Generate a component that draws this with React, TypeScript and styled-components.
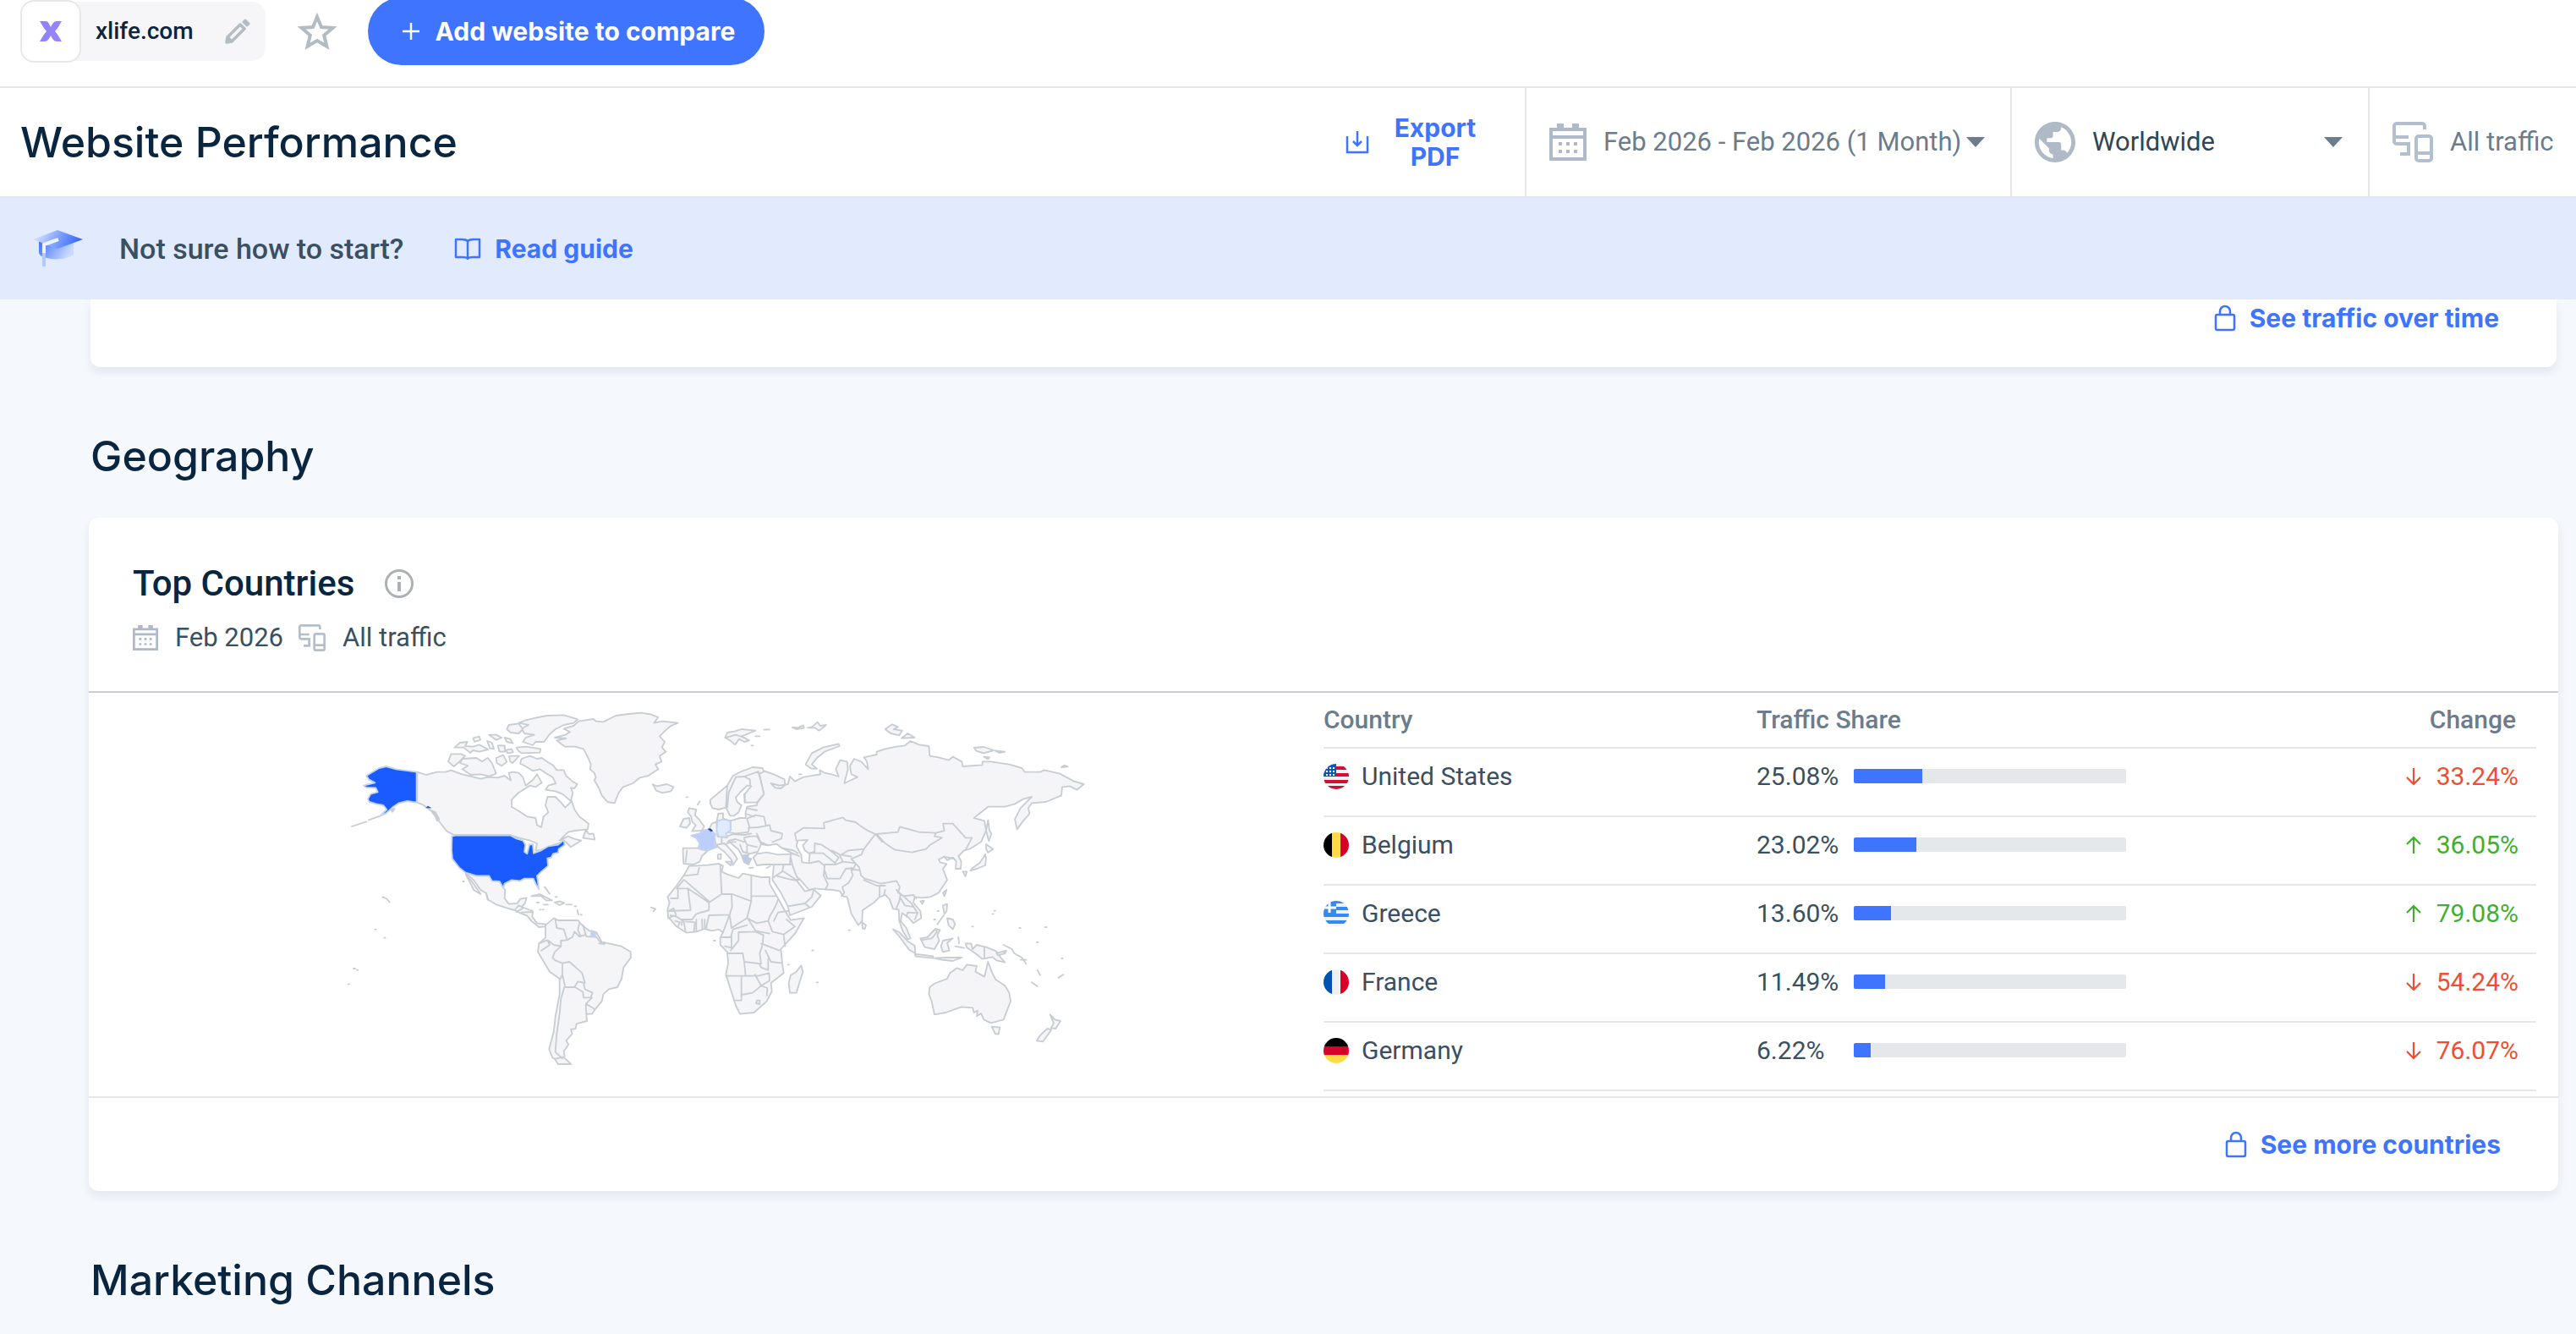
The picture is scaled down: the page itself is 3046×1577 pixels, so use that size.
import React from "react";
import styled, { createGlobalStyle } from "styled-components";

const GlobalStyle = createGlobalStyle`
  *, *::before, *::after { box-sizing: border-box; }
  html, body { margin: 0; background: #f5f8fd; overflow: hidden; }
  body { font-family: Roboto, "Liberation Sans", sans-serif; font-size: 30px; line-height: 36px; color: #3a4f60; }
  button, select { font: inherit; color: inherit; background: none; border: 0; padding: 0; margin: 0; }
  svg { display: block; flex: none; }
`;

const brand = `Inter, "Liberation Sans", sans-serif`;

/* ---------- top bar ---------- */
const TopBar = styled.header`
  display: flex;
  align-items: center;
  height: 104px;
  padding: 0 24px 28px;
  border-bottom: 2px solid #e5e7e9;
  background: #fff;
`;

const SiteChip = styled.div`
  display: flex;
  align-items: center;
  height: 70px;
  padding-right: 18px;
  border-radius: 16px;
  background: #f6f6f8;
`;

const Favicon = styled.span`
  display: grid;
  place-items: center;
  width: 72px;
  height: 74px;
  margin-right: 17px;
  border: 2px solid #e6e8ea;
  border-radius: 16px;
  background: #fff;
`;

const SiteName = styled.span`
  font-size: 28px;
  font-weight: 500;
  color: #092540;
`;

const IconButton = styled.button`
  display: grid;
  place-items: center;
  margin-left: 37px;
  cursor: pointer;
`;

const CompareButton = styled.button`
  display: flex;
  align-items: center;
  gap: 18px;
  height: 80px;
  margin-left: 36px;
  padding: 0 35px 0 40px;
  border-radius: 40px;
  background: #3e74fe;
  color: #fff;
  font-family: ${brand};
  font-weight: 700;
  font-size: 30px;
  cursor: pointer;
`;

/* ---------- page header ---------- */
const PageHeader = styled.div`
  display: flex;
  align-items: stretch;
  height: 130px;
  border-bottom: 2px solid #e2e8f0;
  background: #fff;
`;

const Heading = styled.h1`
  flex: 1;
  align-self: center;
  margin: 0;
  padding-left: 24px;
  font-family: ${brand};
  font-size: 50px;
  line-height: 60px;
  font-weight: 500;
  color: #092540;
`;

const ExportButton = styled.button`
  display: flex;
  align-items: center;
  gap: 22px;
  padding-right: 50px;
  color: #3e74fe;
  font-family: ${brand};
  font-weight: 700;
  font-size: 30px;
  line-height: 34px;
  text-align: center;
  cursor: pointer;
  span { width: 112px; }
`;

const FilterCell = styled.div<{ $width: number }>`
  display: flex;
  align-items: center;
  width: ${(p) => p.$width}px;
  padding: 0 30px 0 27px;
  gap: 20px;
  border-left: 2px solid #e5e7e9;
  font-size: 31px;
`;

const FilterButton = styled.button`
  display: flex;
  flex: 1;
  align-items: center;
  justify-content: space-between;
  white-space: nowrap;
  color: #6b7c8c;
  cursor: pointer;
`;

const RegionSelect = styled.select`
  flex: 1;
  height: 60px;
  appearance: none;
  color: #2f4558;
  cursor: pointer;
`;

const Muted = styled.span`
  white-space: nowrap;
  color: #6b7c8c;
`;

/* ---------- guide banner ---------- */
const Banner = styled.aside`
  display: flex;
  align-items: center;
  height: 120px;
  padding-left: 38px;
  background: #e2eafd;
`;

const BannerText = styled.span`
  margin: 0 60px 0 42px;
  font-size: 34px;
  font-weight: 500;
  color: #3a4f60;
`;

const ActionLink = styled.a`
  display: inline-flex;
  align-items: center;
  gap: 16px;
  color: #3e74fe;
  font-family: ${brand};
  font-weight: 700;
  font-size: 30px;
  line-height: 36px;
  text-decoration: none;
`;

/* ---------- content ---------- */
const Content = styled.main`
  padding: 0 21px 0 105px;
`;

const Card = styled.section`
  border-radius: 12px;
  background: #fff;
  box-shadow: 0 6px 12px rgba(14, 30, 62, 0.08);
`;

const CutCard = styled(Card)`
  display: flex;
  align-items: flex-start;
  justify-content: flex-end;
  height: 80px;
  margin: 0 2px;
  padding: 4px 68px 0 0;
  border-radius: 0 0 12px 12px;
`;

const SectionTitle = styled.h2`
  margin: 0;
  padding: 75px 0 43px 2px;
  font-family: ${brand};
  font-size: 50px;
  line-height: 60px;
  font-weight: 500;
  color: #092540;
`;

const CardHeader = styled.div`
  height: 207px;
  padding: 52px 52px 0;
  border-bottom: 2px solid #c9cdd1;
`;

const CardTitleRow = styled.div`
  display: flex;
  align-items: center;
  gap: 36px;
`;

const CardTitle = styled.h3`
  margin: 0;
  font-size: 42px;
  line-height: 52px;
  font-weight: 500;
  color: #092540;
`;

const CardMeta = styled.div`
  display: flex;
  align-items: center;
  margin-top: 20px;
  font-size: 31px;
`;

const MetaText = styled.span`
  margin: 0 18px 0 20px;
`;

const CardBody = styled.div`
  display: grid;
  grid-template-columns: 1fr 1fr;
`;

const MapPane = styled.div`
  display: flex;
  justify-content: center;
  padding-top: 3px;
`;

const TablePane = styled.div`
  padding: 0 26px 6px 0;
`;

const CountryTable = styled.table`
  width: 100%;
  border-collapse: collapse;
  table-layout: fixed;
`;

const HeadCell = styled.th<{ $width?: string; $end?: boolean }>`
  width: ${(p) => p.$width || "auto"};
  height: 65px;
  padding: 0 ${(p) => (p.$end ? 24 : 0)}px 0 0;
  border-bottom: 2px solid #e5e7e9;
  text-align: ${(p) => (p.$end ? "right" : "left")};
  font-weight: 500;
  color: #6b7c8c;
`;

const Cell = styled.td`
  height: 81px;
  padding: 0 0 14px;
  border-bottom: 2px solid #e5e7e9;
`;

const Inline = styled.div<{ $end?: boolean; $tone?: string }>`
  display: flex;
  align-items: center;
  justify-content: ${(p) => (p.$end ? "flex-end" : "flex-start")};
  gap: ${(p) => (p.$end ? 17 : 15)}px;
  padding-right: ${(p) => (p.$end ? 21 : 0)}px;
  color: ${(p) => p.$tone || "#3a4f60"};
`;

const Percent = styled.span`
  width: 100px;
`;

const Flag = styled.svg`
  width: 30px;
  height: 30px;
  border-radius: 50%;
`;

const Track = styled.div`
  width: 322px;
  height: 17px;
  border-radius: 2px;
  overflow: hidden;
  background: #e4e8eb;
`;

const Fill = styled.div`
  height: 100%;
  background: #3e74fe;
`;

const CardFooter = styled.div`
  display: flex;
  align-items: center;
  justify-content: flex-end;
  height: 112px;
  padding-right: 68px;
  border-top: 2px solid #e5e7e9;
`;

/* ---------- icons ---------- */
const DevicesIcon = ({ size }: { size: number }) => (
  <svg width={size} height={size} viewBox="0 0 48 48" fill="none" stroke="#b3bfcc" strokeWidth="4">
    <path d="M38 9V5a3 3 0 0 0-3-3H5a3 3 0 0 0-3 3v18a3 3 0 0 0 3 3h14M2 18h17M8 26h11v12H9" />
    <rect x="28" y="17" width="18" height="29" rx="3" />
    <path d="M28 37h18" />
  </svg>
);

const CalendarIcon = ({ size }: { size: number }) => (
  <svg width={size} height={size} viewBox="0 0 44 44" fill="#b0b9c8">
    <path fillRule="evenodd" d="M0 5h9V0h8v5h10V0h8v5h9v39H0zM4 9v5h36V9zM4 18v22h36V18z" />
    <path d="M11 22h4v4h-4zM20 22h4v4h-4zM29 22h4v4h-4zM11 31h4v4h-4zM20 31h4v4h-4zM29 31h4v4h-4z" />
  </svg>
);

const GlobeIcon = () => (
  <svg width="48" height="48" viewBox="2 2 20 20" fill="#b0bac6">
    <path d="M12 2C6.480 2 2 6.480 2 12s4.480 10 10 10 10-4.480 10-10S17.520 2 12 2zm-1 17.930c-3.950-.49-7-3.850-7-7.930 0-.62.080-1.210.210-1.790L9 15v1c0 1.100.900 2 2 2v1.930zm6.900-2.540c-.26-.81-1-1.390-1.900-1.390h-1v-3c0-.55-.45-1-1-1H8v-2h2c.550 0 1-.45 1-1V7h2c1.100 0 2-.9 2-2v-.41c2.930 1.190 5 4.060 5 7.410 0 2.080-.8 3.970-2.100 5.390z" />
  </svg>
);

const Caret = () => (
  <svg width="22" height="12" viewBox="0 0 22 12">
    <path d="M0 0h22L11 12z" fill="#6b7c8c" />
  </svg>
);

const LockIcon = () => (
  <svg width="26" height="32" viewBox="0 0 26 32" fill="none" stroke="#3e74fe" strokeWidth="2.500">
    <rect x="2" y="12" width="22" height="18" rx="2" />
    <path d="M7 12V8a6 6 0 0 1 12 0v4" />
  </svg>
);

const BookIcon = () => (
  <svg width="32" height="26" viewBox="0 0 32 26" fill="none" stroke="#3e74fe" strokeWidth="2.500" strokeLinejoin="round">
    <path d="M16 4c-2-2-4-2-7-2H2v21h8c3 0 5 0 6 2 1-2 3-2 6-2h8V2h-7c-3 0-5 0-7 2zM16 4v20" />
  </svg>
);

const PencilIcon = () => (
  <svg width="30" height="30" viewBox="0 0 30 30" fill="none" stroke="#b3bcc2" strokeLinejoin="round">
    <path d="M3 22L18 7l5 5L8 27l-6 1z" strokeWidth="3.500" />
    <path d="M2 28l2-6 4 4z" fill="#b3bcc2" strokeWidth="2" />
    <path d="M22 4l2-2 4 4-2 2z" fill="#b3bcc2" strokeWidth="3" />
  </svg>
);

const StarIcon = () => (
  <svg width="48" height="46" viewBox="0 0 48 46">
    <path
      d="M24 6l5 12 13.500 1-10.300 8.800 3.200 13L24 34l-11.400 6.800 3.200-13L5.500 19 19 18z"
      fill="none"
      stroke="#b3bcc2"
      strokeWidth="4"
    />
  </svg>
);

const SiteLogo = () => (
  <svg width="28" height="26" viewBox="0 0 28 26">
    <defs>
      <linearGradient id="xg" x1="0" y1="0" x2="1" y2="0">
        <stop offset="0" stopColor="#8d84fb" />
        <stop offset="1" stopColor="#9b84f8" />
      </linearGradient>
    </defs>
    <path
      d="M1 1h7c3 0 4 3 6 7 2-4 4-7 7-7h6c-3 5-5 9-8 12 3 3 5 7 8 12h-6c-3 0-5-3-7-7-2 4-4 7-7 7H1c3-5 5-9 8-12-3-3-5-7-8-12z"
      fill="url(#xg)"
    />
  </svg>
);

const HatIcon = () => (
  <svg width="61" height="44" viewBox="0 0 61 44">
    <defs>
      <linearGradient id="hatTop" x1="0" y1="0.400" x2="1" y2="0.600">
        <stop offset="0" stopColor="#dce7ff" />
        <stop offset="0.500" stopColor="#7da0ff" />
        <stop offset="1" stopColor="#2b61f6" />
      </linearGradient>
      <linearGradient id="hatBase" x1="0" y1="0" x2="1" y2="0.300">
        <stop offset="0" stopColor="#3e74fe" />
        <stop offset="1" stopColor="#ccdaff" />
      </linearGradient>
    </defs>
    <path d="M8 14h41v15c-8 6-24 7-35 3-4-1-6-3-6-6z" fill="url(#hatBase)" />
    <path d="M1 11L30 0l30 11-30 11z" fill="url(#hatTop)" />
    <path d="M31 11L14 17v17" fill="none" stroke="#eef3ff" strokeWidth="4" />
    <path d="M14 27v16" stroke="#b3c8ff" strokeWidth="4" />
  </svg>
);

const InfoIcon = () => (
  <svg width="34" height="34" viewBox="0 0 34 34" fill="none" stroke="#adb0b3" strokeWidth="3">
    <circle cx="17" cy="17" r="15.500" />
    <path d="M17 15v11M17 8v4" strokeWidth="4" />
  </svg>
);

const DownloadIcon = () => (
  <svg width="28" height="28" viewBox="0 0 28 28" fill="none" stroke="#3e74fe" strokeWidth="2.500">
    <path d="M2 7v19h24V7M14 1v17M9 13l5 5 5-5" />
  </svg>
);

const PlusIcon = () => (
  <svg width="22" height="22" viewBox="0 0 22 22" stroke="#fff" strokeWidth="2.500">
    <path d="M11 1v20M1 11h20" />
  </svg>
);

const Arrow = ({ up }: { up: boolean }) => (
  <svg width="20" height="22" viewBox="0 0 20 22" fill="none" stroke="currentColor" strokeWidth="2.200">
    <path d={up ? "M10 21V2M2 10l8-8 8 8" : "M10 1v19M2 12l8 8 8-8"} />
  </svg>
);

/* ---------- flags ---------- */
const flags: Record<string, React.ReactNode> = {
  us: (
    <>
      <path fill="#eef0f3" d="M0 0h30v30H0z" />
      <path fill="#d01030" d="M0 3h30v4H0zM0 11h30v4H0zM0 19h30v4H0zM0 26h30v4H0z" />
      <path fill="#0a57b5" d="M0 0h15v15H0z" />
      <path
        d="M3 5h10M3 9h10M3 13h10"
        stroke="#fff"
        strokeWidth="2"
        strokeDasharray="2 2"
      />
    </>
  ),
  be: (
    <>
      <path d="M0 0h10v30H0z" />
      <path fill="#ffda44" d="M10 0h10v30H10z" />
      <path fill="#d80027" d="M20 0h10v30H20z" />
    </>
  ),
  gr: (
    <>
      <path fill="#f0f0f0" d="M0 0h30v30H0z" />
      <path fill="#338af3" d="M0 0h30v3H0zM0 7h30v4H0zM0 15h30v4H0zM0 23h30v4H0zM0 0h15v15H0z" />
      <path stroke="#fff" strokeWidth="3" d="M7 1v13M0 8h15" />
    </>
  ),
  fr: (
    <>
      <path fill="#0052b4" d="M0 0h10v30H0z" />
      <path fill="#f0f0f0" d="M10 0h10v30H10z" />
      <path fill="#d80027" d="M20 0h10v30H20z" />
    </>
  ),
  de: (
    <>
      <path d="M0 0h30v10H0z" />
      <path fill="#d80027" d="M0 10h30v10H0z" />
      <path fill="#ffda44" d="M0 20h30v10H0z" />
    </>
  ),
};

/* ---------- world map ---------- */
const westLand = [
  // Greenland
  "853,92 905,84 915,92 940,94 985,72 1030,66 1075,62 1110,68 1135,78 1120,98 1150,92 1205,98 1180,108 1160,125 1140,145 1158,165 1148,185 1162,200 1140,215 1147,235 1125,245 1135,262 1100,285 1070,292 1045,312 1010,325 995,345 980,382 955,378 935,355 925,330 908,300 914,292 908,275 893,262 896,245 888,225 870,190 840,182 805,182 790,172 775,160 808,153 768,150 805,140 822,130 800,118 835,108",
  // Arctic archipelago
  "700,80 740,72 800,70 850,85 835,98 800,105 770,120 748,140 730,165 700,165 690,177 655,165 665,150 695,140 660,135 650,118 675,105 640,98 665,88",
  "605,105 640,100 655,120 640,135 612,132 598,120",
  "632,185 665,182 718,190 715,203 650,205 640,198",
  "412,185 432,168 458,165 450,180 478,182 500,175 532,192 500,200 478,195 468,204 445,185",
  "478,152 500,146 504,158 484,165", "535,140 560,140 580,150 560,158",
  "528,162 545,168 552,190 538,188", "566,178 590,178 592,200 572,200", "596,194 615,190 620,202 600,205",
  "590,150 610,155 620,170 598,165",
  "400,208 435,208 450,215 430,235 410,252 390,235",
  "440,225 490,222 510,235 530,222 545,240 560,278 535,287 505,280 470,282 440,262 460,250 432,240",
  "560,222 585,212 598,235 580,250 562,240", "606,215 642,215 618,240 610,235",
  "650,225 680,215 705,225 722,222 740,235 762,248 775,265 800,265 808,285 830,305 848,315 838,330 825,328 832,345 825,375 795,350 770,340 735,335 745,320 772,312 760,290 735,275 715,262 690,268 665,252 645,242",
  // Canada
  "280,272 312,282 350,272 380,272 400,266 440,280 480,290 505,296 530,290 565,292 590,285 612,302 605,275 620,272 640,275 655,290 665,320 690,300 705,280 722,310 700,325 680,320 640,345 615,370 615,395 640,410 670,430 700,435 705,460 720,468 728,430 745,415 735,390 742,360 770,360 790,380 805,398 828,375 838,405 855,430 888,455 885,475 840,480 815,485 785,515 815,500 840,510 862,515 825,538 815,528 805,518 765,530 720,548 700,550 705,525 680,515 640,505 610,495 410,495 385,482 360,450 330,410 300,388 280,380",
  "878,478 890,492 905,490 910,512 868,506",
  // Mexico and Central America
  "450,628 490,640 535,640 545,655 572,660 585,682 592,690 590,720 605,740 635,738 645,722 668,718 662,738 650,750 690,765 688,785 705,808 735,812 735,820 712,822 685,800 670,782 645,772 625,762 600,755 560,742 532,725 525,702 505,690 480,655",
  "452,635 470,655 492,685 505,705 480,690 468,665",
  "685,712 715,705 758,727 738,728 720,712", "768,735 785,730 802,737 785,744",
  // South America
  "735,815 765,790 780,798 850,798 865,815 890,835 915,840 935,875 960,880 1005,890 1037,910 1038,930 1012,965 1005,1005 990,1035 960,1042 940,1060 935,1085 910,1115 900,1130 880,1130 882,1155 845,1165 842,1182 825,1185 830,1200 808,1225 817,1238 800,1262 803,1280 785,1300 760,1285 748,1255 765,1190 770,1140 785,1060 785,1005 750,980 708,910 712,880 735,860 735,830",
  "768,1290 798,1282 826,1308 780,1308",
  // Iceland and British Isles
  "1115,315 1130,322 1165,315 1190,325 1180,340 1150,346 1128,338",
  "1245,400 1270,405 1265,425 1280,440 1298,465 1290,480 1255,482 1268,460 1255,448 1252,430 1240,415",
  "1225,438 1245,435 1248,455 1235,470 1212,465",
  // Iberia, Italy, islands
  "1223,542 1275,542 1310,552 1290,570 1282,590 1260,600 1225,597 1223,570",
  "1340,530 1370,525 1385,540 1405,563 1415,580 1400,602 1395,583 1370,555 1352,542",
  "1375,590 1395,590 1392,603", "1346,565 1358,562 1357,580 1347,580",
  // Africa
  "1245,605 1262,605 1310,602 1350,597 1365,605 1360,625 1380,635 1420,648 1435,632 1465,638 1500,645 1530,645 1530,668 1560,720 1585,765 1605,797 1652,790 1620,845 1570,900 1575,950 1580,985 1535,1020 1538,1050 1520,1085 1475,1125 1425,1130 1410,1100 1375,990 1383,950 1380,910 1355,885 1355,860 1365,840 1350,830 1325,835 1300,828 1270,838 1235,842 1200,820 1170,785 1168,760 1175,735 1168,715 1200,675 1225,640",
  "1642,958 1648,980 1625,1055 1602,1055 1598,1020 1605,992 1625,980",
];

const eastLand = [
  // Eurasia
  "110,265 130,268 165,280 203,298 205,318 190,330 170,328 155,312 185,320 215,315 222,288 240,305 270,290 330,280 328,265 345,275 370,280 395,288 385,262 400,230 425,235 428,262 415,312 440,300 462,290 440,280 435,250 450,225 475,235 500,262 495,235 485,220 530,210 530,200 560,190 600,182 630,178 650,162 680,175 715,180 718,215 750,220 785,230 800,218 832,235 835,252 905,247 905,235 935,235 1000,245 1045,258 1055,272 1110,272 1125,265 1180,278 1230,305 1265,315 1240,335 1215,322 1188,325 1185,355 1130,378 1080,382 1068,400 1072,420 1050,445 1028,475 1020,440 1040,400 1080,360 1050,368 1020,385 985,395 925,395 875,435 912,445 918,480 900,520 860,545 840,550 820,570 830,590 828,615 810,615 812,588 800,575 780,585 770,572 750,582 755,592 778,598 765,615 780,655 750,700 720,715 690,718 665,715 660,735 685,765 688,790 660,808 645,790 620,772 615,800 635,825 650,862 640,865 622,835 610,800 608,760 588,757 575,722 560,708 540,715 520,735 480,762 478,800 465,815 440,775 425,715 410,712 400,695 375,690 345,688 310,685 290,690 255,650 245,655 275,695 305,688 332,710 300,750 222,780 215,748 190,700 160,655 165,600 130,600 105,603 92,575 105,562 140,557 180,565 235,562 195,542 175,527 145,532 120,528 108,555 78,562 70,575 85,580 75,600 60,592 50,565 38,545 10,522 -5,528 -42,540 -70,550 -102,543 -98,525 -110,505 -125,498 -98,490 -80,478 -65,475 -55,455 -38,448 -32,420 -15,418 -15,437 10,445 45,435 65,435 65,415 70,395 105,390 105,383 130,350 115,285",
  // Scandinavia
  "-60,370 -30,345 0,320 20,285 50,270 90,255 125,258 130,270 112,280 118,300 130,350 105,380 62,380 62,350 85,322 70,320 45,345 30,362 35,378 50,390 40,415 25,427 10,427 -5,398 -30,405 -52,400 -60,385",
  // Arctic islands
  "278,245 300,205 340,185 395,172 398,180 345,200 318,222 300,245 318,260 298,260",
  "0,132 25,128 50,120 100,125 65,140 50,145 78,160 60,165 42,155 28,175 10,160 -8,150",
  "230,113 250,115 270,106 272,116 245,120", "285,115 300,112 320,95 330,108 350,105 340,115 325,125 310,115",
  "560,120 585,103 605,112 590,120 620,125 610,142 580,135", "618,152 640,135 665,150",
  "875,186 910,183 945,195 910,205 885,198", "950,196 985,200 965,204", "910,218 930,220 925,226", "1185,255 1195,248 1208,253",
  // Japan and Sakhalin
  "918,528 943,545 925,557 918,545", "915,563 918,580 915,603 885,615 862,622 870,612 895,595 908,575", "835,625 850,625 845,642",
  "925,443 930,480 937,490 928,517 918,480", "765,700 778,690 770,712",
  // South-east Asia
  "588,830 610,840 640,872 665,888 667,915 645,902 610,855", "665,918 690,920 730,925 730,932 668,926", "735,932 780,930 832,930 800,942 760,938",
  "685,862 710,858 738,828 755,832 745,850 752,870 735,900 700,893", "765,870 800,862 780,878 788,905 765,910 758,890",
  "845,880 865,880 870,900 885,885 918,893 955,908 970,930 985,947 955,940 940,928 905,935 880,915 850,895",
  "765,745 780,740 778,765 770,775", "780,790 800,795 808,812 800,830 785,815", "478,805 492,815 488,828 480,827",
  "685,730 698,728 692,740", "955,915 990,905 985,915 960,922",
  // Oceania
  "718,1035 735,1022 780,1005 790,985 815,967 835,975 850,955 885,960 880,980 912,998 920,965 925,945 940,985 952,1008 985,1030 1000,1055 1005,1085 980,1150 935,1162 910,1150 900,1128 885,1138 888,1118 875,1125 870,1108 830,1105 775,1125 735,1132 725,1085 715,1060",
  "938,1175 967,1178 962,1202 950,1200", "1145,1132 1162,1150 1182,1155 1165,1182 1148,1180 1158,1162", "1135,1182 1150,1186 1120,1228 1098,1225 1108,1208",
];

const westBorders =
  // South America
  "M770,795 775,825 800,830 812,868 M712,880 742,868 750,885 720,905 M745,870 765,885 790,890 768,910 760,930 770,940 795,950 820,945 865,985 875,1020 850,1015 838,1035 805,1035 795,990 795,950 M812,868 830,858 838,838 855,855 875,850 M790,890 790,870 812,868 M855,810 850,832 860,855 M868,815 880,855 915,857 932,878 M870,1020 875,1042 902,1055 895,1072 870,1072 868,1052 840,1035 M900,1072 878,1095 880,1130 M880,1095 910,1113 M802,1035 790,1075 785,1130 775,1200 770,1265 795,1288 M795,990 788,1005 M925,880 945,882 " +
  // Central America
  "M625,762 640,745 650,750 M650,770 690,768 M530,725 525,705 M632,768 655,755 " +
  // Africa
  "M1225,640 1275,635 1280,612 M1228,655 1318,733 1360,705 1355,600 M1180,720 1205,720 1205,685 1240,685 1250,762 1172,765 M1240,685 1315,735 1315,762 1270,775 1255,795 1220,795 1218,815 M1225,655 1200,685 M1360,705 1398,705 1465,730 1465,640 M1465,712 1555,712 M1395,705 1397,750 1388,778 1315,780 1305,825 M1465,730 1450,790 1395,825 1388,778 M1388,778 1365,840 M1450,790 1485,808 1525,800 1530,785 1550,750 1560,725 M1525,800 1540,838 1580,848 1620,820 1590,795 M1455,795 1480,835 1530,845 M1355,858 1392,858 1400,830 1450,815 M1395,855 1395,895 1372,890 M1420,840 1420,870 1392,905 M1420,840 1480,838 1508,850 1505,885 1495,915 1500,952 1440,945 1435,915 1380,915 M1500,880 1565,905 M1580,850 1585,890 M1515,905 1535,945 1575,950 M1375,995 1490,995 1528,985 1530,1012 1500,1030 1478,990 M1430,1000 1430,1082 1405,1082 M1430,1062 1470,1055 1500,1030 1522,1038 1520,1065 M1440,945 1445,995 M1495,955 1500,965 1525,975 1525,935 M1178,780 1200,785 1225,800 1232,838 M1232,802 1265,805 1262,838 M1270,795 1270,835 M1290,795 1292,828 M1300,795 1300,825 M1172,765 1190,755 1198,780 1170,790 M1195,800 1212,805 1205,820 M1485,1082 1495,1082 1495,1095 1482,1092 Z M1595,765 1560,770 1545,800 " +
  // Iberia
  "M1237,550 1232,590";

const eastBorders =
  "M245,515 240,490 270,470 345,472 342,452 410,433 420,443 455,450 475,465 495,478 525,492 485,545 430,550 400,568 M530,492 605,485 612,466 680,485 740,488 735,500 762,505 720,530 705,545 655,557 595,548 560,525 530,492 M740,488 770,480 765,455 800,455 845,505 868,505 845,548 M525,492 550,520 M485,545 475,565 440,580 468,610 475,640 488,650 545,668 600,658 612,680 605,700 625,712 660,708 670,720 M470,620 440,618 445,640 430,665 408,680 415,700 405,712 M485,655 530,675 560,675 M540,680 540,712 M560,690 555,710 M345,610 345,600 385,600 410,590 455,595 450,612 420,615 400,650 355,650 345,620 M292,595 325,588 345,605 342,640 357,670 348,688 M225,575 232,605 245,640 255,655 M165,600 225,600 M200,600 195,625 165,645 M200,625 245,655 M175,640 210,650 250,658 M215,748 275,738 300,715 305,695 M275,738 290,750 M600,690 615,705 610,730 600,755 M615,720 630,745 660,750 M625,712 655,740 675,772 640,770 635,785 M640,770 675,772 665,795 M290,560 310,555 310,525 335,530 365,550 395,575 385,590 M290,560 340,560 385,597 M370,550 400,565 440,572 M400,570 410,590 M225,562 222,598 M235,562 255,570 M195,542 235,550 250,560 M75,470 110,468 150,460 155,480 195,490 192,508 160,520 M0,485 30,490 75,485 78,465 70,437 M70,437 100,425 130,430 137,460 M65,420 95,430 M70,400 105,408 M60,505 80,500 105,500 120,525 M60,510 70,530 105,538 M0,500 20,492 60,495 85,490 M5,515 30,510 60,520 M45,530 55,555 75,560 M70,535 70,555 M0,520 30,520 M-38,448 -35,500 0,505 M-45,505 -40,535 M-20,500 -20,525 M-10,445 12,445 12,478 -5,490 M0,320 -5,398 M0,398 5,345 30,290 60,288 80,298 82,320 M60,288 110,270 115,285 M62,380 60,350 M770,572 805,580 M912,893 912,932 M738,830 745,838 725,862 690,868 M105,490 118,520 145,532 M-5,150 30,140 60,150";

const islets =
  "M157,715 170,720 182,733 M130,830h4 M163,860h4 M54,969h6 M66,974h4 M35,1024h5 M732,680 740,690 750,704 M770,715h6 M705,735h6 M728,742h16 M808,742h20 M838,748h6 M848,762 852,778 M860,778h4 M714,760h4 M724,760h4 M1110,752 1125,758 1118,766 M1235,361h5 M1275,388 1282,376 M1332,870h5 M48,465 100,448 M108,442 148,428 M442,660h4";

const eastIslets =
  "M130,122 150,121 M100,145h15 M85,178h6 M255,280h8 M746,765h4 M733,795h4 M768,780 745,812 M820,858 822,880 M808,890 840,896 M868,820h4 M940,775h4 M947,764h4 M1036,825h4 M1128,822h4 M1098,876h4 M1186,933h4 M980,885 1010,900 1018,915 1045,930 1060,952 M1040,938 1060,938 M1100,975 1110,992 M1080,1018 1100,1032 M1175,1002 1192,990 M430,833h5 M301,905h4 M317,1018h5 M215,955h4 M78,612 92,611 M140,612 152,606";

const WorldMap = () => (
  <svg
    width="1010"
    height="460"
    viewBox="-210 0 3030 1380"
    role="img"
    aria-label="Traffic by country"
    fill="#f5f5f8"
    stroke="#c7cdd2"
    strokeWidth="5.500"
    strokeLinejoin="round"
    strokeLinecap="round"
  >
    <g transform="translate(1380 0)">
      {eastLand.map((p) => (
        <polygon key={p} points={p} />
      ))}
      <path d={eastBorders} fill="none" />
      <path d={eastIslets} fill="none" />
      <polygon fill="#fff" points="250,515 285,513 268,532 275,550 292,562 290,595 265,592 262,565 245,535" />
      <polygon fill="#b9cbf2" points="55,568 72,565 70,575 82,582 74,598 62,592" />
    </g>
    {westLand.map((p) => (
      <polygon key={p} points={p} />
    ))}
    <path d={westBorders} fill="none" />
    <path d={islets} fill="none" />
    <g stroke="#c3d3ee">
      <polygon
        fill="#1a5bff"
        points="403,500 415,497 610,496 632,508 655,515 664,530 660,555 670,562 678,530 690,528 693,560 720,550 745,535 780,530 800,513 803,530 782,545 780,558 762,562 755,575 742,578 744,605 720,625 705,640 708,660 712,688 702,672 692,650 660,650 645,658 615,655 590,668 585,682 572,660 545,658 535,640 490,640 450,628 430,612 405,580 402,550"
      />
      <polygon
        fill="#1a5bff"
        points="170,252 205,262 278,272 278,380 245,375 215,382 195,395 170,418 148,428 172,405 160,390 135,385 110,378 105,368 115,350 140,343 133,328 100,327 90,320 130,310 108,298 100,285 125,270 145,258"
      />
      <polygon
        fill="#bccdff"
        points="1252,498 1282,490 1300,478 1315,475 1338,492 1334,505 1338,540 1310,550 1278,543 1282,525 1270,505"
      />
      <polygon fill="#e1ebfe" points="1345,445 1365,440 1390,445 1392,478 1375,490 1378,502 1350,502 1342,480" />
      <polygon fill="#c4d1ea" points="898,834 915,842 910,856 898,854" />
    </g>
    <path d="M1313,474 1320,473 1328,480 1322,482z" fill="#17349a" stroke="#23419f" strokeWidth="2" />
    <path d="M312,398 318,393 328,399z" fill="#17349a" stroke="#4a66a5" strokeWidth="2" />
    <path d="M330,408 345,428 350,445 358,440 345,415zM186,405 200,402 192,413z" fill="#c9cfd4" />
  </svg>
);

/* ---------- data ---------- */
const rows = [
  { flag: "us", name: "United States", share: 25.08, change: "33.24%", up: false },
  { flag: "be", name: "Belgium", share: 23.02, change: "36.05%", up: true },
  { flag: "gr", name: "Greece", share: 13.6, change: "79.08%", up: true },
  { flag: "fr", name: "France", share: 11.49, change: "54.24%", up: false },
  { flag: "de", name: "Germany", share: 6.22, change: "76.07%", up: false },
];

export default function App() {
  return (
    <>
      <GlobalStyle />
      <TopBar>
        <SiteChip>
          <Favicon>
            <SiteLogo />
          </Favicon>
          <SiteName>xlife.com</SiteName>
          <IconButton aria-label="Edit website">
            <PencilIcon />
          </IconButton>
        </SiteChip>
        <IconButton aria-label="Add to favorites">
          <StarIcon />
        </IconButton>
        <CompareButton>
          <PlusIcon />
          Add website to compare
        </CompareButton>
      </TopBar>

      <PageHeader>
        <Heading>Website Performance</Heading>
        <ExportButton>
          <DownloadIcon />
          <span>Export PDF</span>
        </ExportButton>
        <FilterCell $width={574}>
          <CalendarIcon size={44} />
          <FilterButton>
            Feb 2026 - Feb 2026 (1 Month)
            <Caret />
          </FilterButton>
        </FilterCell>
        <FilterCell $width={423}>
          <GlobeIcon />
          <RegionSelect aria-label="Region" defaultValue="Worldwide">
            <option>Worldwide</option>
          </RegionSelect>
          <Caret />
        </FilterCell>
        <FilterCell $width={246}>
          <DevicesIcon size={48} />
          <Muted>All traffic</Muted>
        </FilterCell>
      </PageHeader>

      <Banner>
        <HatIcon />
        <BannerText>Not sure how to start?</BannerText>
        <ActionLink href="#guide">
          <BookIcon />
          Read guide
        </ActionLink>
      </Banner>

      <Content>
        <CutCard>
          <ActionLink href="#traffic">
            <LockIcon />
            See traffic over time
          </ActionLink>
        </CutCard>

        <SectionTitle>Geography</SectionTitle>
        <Card>
          <CardHeader>
            <CardTitleRow>
              <CardTitle>Top Countries</CardTitle>
              <InfoIcon />
            </CardTitleRow>
            <CardMeta>
              <CalendarIcon size={30} />
              <MetaText>Feb 2026</MetaText>
              <DevicesIcon size={32} />
              <MetaText>All traffic</MetaText>
            </CardMeta>
          </CardHeader>
          <CardBody>
            <MapPane>
              <WorldMap />
            </MapPane>
            <TablePane>
              <CountryTable>
                <thead>
                  <tr>
                    <HeadCell $width="512px">Country</HeadCell>
                    <HeadCell $width="512px">Traffic Share</HeadCell>
                    <HeadCell $end>Change</HeadCell>
                  </tr>
                </thead>
                <tbody>
                  {rows.map((r) => (
                    <tr key={r.name}>
                      <Cell>
                        <Inline>
                          <Flag viewBox="0 0 30 30">{flags[r.flag]}</Flag>
                          {r.name}
                        </Inline>
                      </Cell>
                      <Cell>
                        <Inline>
                          <Percent>{r.share.toFixed(2)}%</Percent>
                          <Track>
                            <Fill style={{ width: `${r.share}%` }} />
                          </Track>
                        </Inline>
                      </Cell>
                      <Cell>
                        <Inline $end $tone={r.up ? "#3fb02c" : "#f04e30"}>
                          <Arrow up={r.up} />
                          {r.change}
                        </Inline>
                      </Cell>
                    </tr>
                  ))}
                </tbody>
              </CountryTable>
            </TablePane>
          </CardBody>
          <CardFooter>
            <ActionLink href="#countries">
              <LockIcon />
              See more countries
            </ActionLink>
          </CardFooter>
        </Card>

        <SectionTitle>Marketing Channels</SectionTitle>
      </Content>
    </>
  );
}
